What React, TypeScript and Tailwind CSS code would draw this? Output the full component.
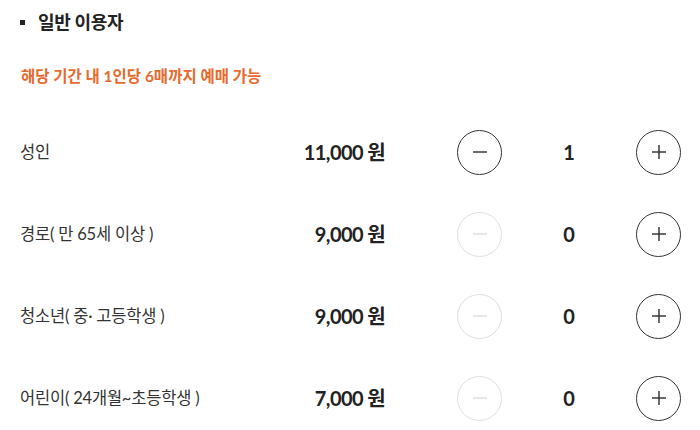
import React from "react";

const rows = [
  { price: "11,000", count: 1 },
  { price: "9,000", count: 0 },
  { price: "9,000", count: 0 },
  { price: "7,000", count: 0 },
];
const labels = ["성인", "경로( 만 65세 이상 )", "청소년( 중· 고등학생 )", "어린이( 24개월~초등학생 )"];

function CircleBtn({ type, disabled }: { type: "minus" | "plus"; disabled?: boolean }) {
  const c = disabled ? "#dcdcdc" : "#2b2b2b";
  return (
    <div
      className={`flex h-[45px] w-[45px] items-center justify-center rounded-full border-[1.5px] ${
        disabled ? "border-[#e0e0e0]" : "border-[#333333]"
      }`}
    >
      <svg width="18" height="18" viewBox="0 0 18 18">
        <line x1="2" y1="9" x2="16" y2="9" stroke={c} strokeWidth="1.4" />
        {type === "plus" && <line x1="9" y1="2" x2="9" y2="16" stroke={c} strokeWidth="1.4" />}
      </svg>
    </div>
  );
}

export default function App() {
  return (
    <div
      className="w-[700px] h-[430px] overflow-hidden bg-white pl-5 pr-[19px]"
      style={{ fontFamily: 'Lato, "Noto Sans CJK KR", sans-serif' }}
    >
      <div className="flex h-[44px] items-center pt-[1px]">
        <span className="mr-[13px] h-[5px] w-[5px] bg-[#222]" />
        <span className="text-[18px] font-bold tracking-[-0.3px] text-[#222]">일반 이용자</span>
      </div>
      <div className="flex h-[67px] items-center pb-[1px] pl-[1px] text-[15.5px] font-bold text-[#e8692d]">
        해당 기간 내 1인당 6매까지 예매 가능
      </div>
      {rows.map((r, i) => (
        <div key={i} className="flex h-[82px] items-center">
          <div className="flex w-[365px] items-center justify-between">
            <span className="text-[16.5px] tracking-[-0.2px] text-[#333]">{labels[i]}</span>
            <span className="text-[20px] font-bold tracking-[-0.6px] text-[#222]">{r.price} 원</span>
          </div>
          <div className="ml-[72px]">
            <CircleBtn type="minus" disabled={r.count === 0} />
          </div>
          <div className="w-[134px] text-center text-[20px] font-bold text-[#222]">{r.count}</div>
          <CircleBtn type="plus" />
        </div>
      ))}
    </div>
  );
}
